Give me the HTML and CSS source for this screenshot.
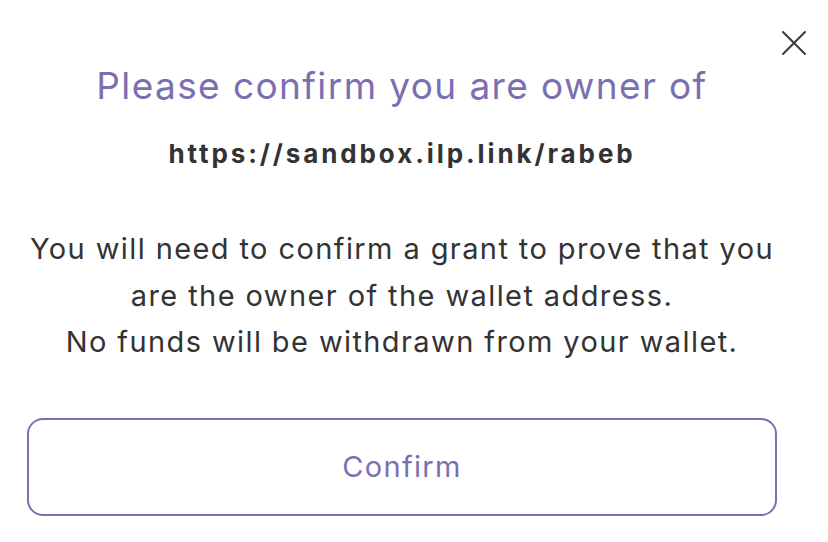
FILE: index.html
```html
<!DOCTYPE html>
<html lang="en">
<head>
<meta charset="utf-8">
<title>Confirm owner</title>
<link rel="stylesheet" href="styles.css">
</head>
<body>
<div class="page">
  <button class="close" aria-label="Close">
    <svg width="26" height="26" viewBox="0 0 26 26"><path d="M2 2 L24 24 M24 2 L2 24" stroke="#3a3a3a" stroke-width="2" stroke-linecap="round"/></svg>
  </button>
  <main class="content">
    <h1 class="title">Please confirm you are owner of</h1>
    <p class="address">https://sandbox.ilp.link/rabeb</p>
    <p class="message">You will need to confirm a grant to prove that you are the owner of the wallet address.<br>No funds will be withdrawn from your wallet.</p>
    <button class="confirm">Confirm</button>
  </main>
</div>
</body>
</html>
```
FILE: styles.css
```css
* { box-sizing: border-box; }
html, body { margin: 0; padding: 0; background: #fff; }
body { font-family: Inter, "Noto Sans", sans-serif; color: #333; }
.page { position: relative; width: 828px; height: 542px; }
.close {
  position: absolute; top: 30px; right: 21px;
  width: 26px; height: 26px; padding: 0; border: 0; background: none;
  display: flex; align-items: center; justify-content: center;
}
.content {
  width: 750px; margin-left: 27px; padding-top: 62px;
  display: flex; flex-direction: column; align-items: center; text-align: center;
}
.title {
  margin: 0; font-size: 37px; font-weight: 400; color: #7b6fb1; line-height: 48px;
  letter-spacing: 1.4px;
}
.address {
  margin: 26px 0 0; font-size: 26px; font-weight: 700; color: #333; line-height: 36px;
  letter-spacing: 2.9px;
}
.message {
  margin: 54px 0 0; font-size: 29px; line-height: 46.5px; color: #333; width: 750px;
  letter-spacing: 1.4px;
}
.confirm {
  margin-top: 52px; width: 750px; height: 98px;
  border: 2px solid #7b6fb1; border-radius: 16px; background: #fff;
  font-family: inherit; font-size: 29px; color: #7b6fb1; letter-spacing: 1.3px;
}
```
